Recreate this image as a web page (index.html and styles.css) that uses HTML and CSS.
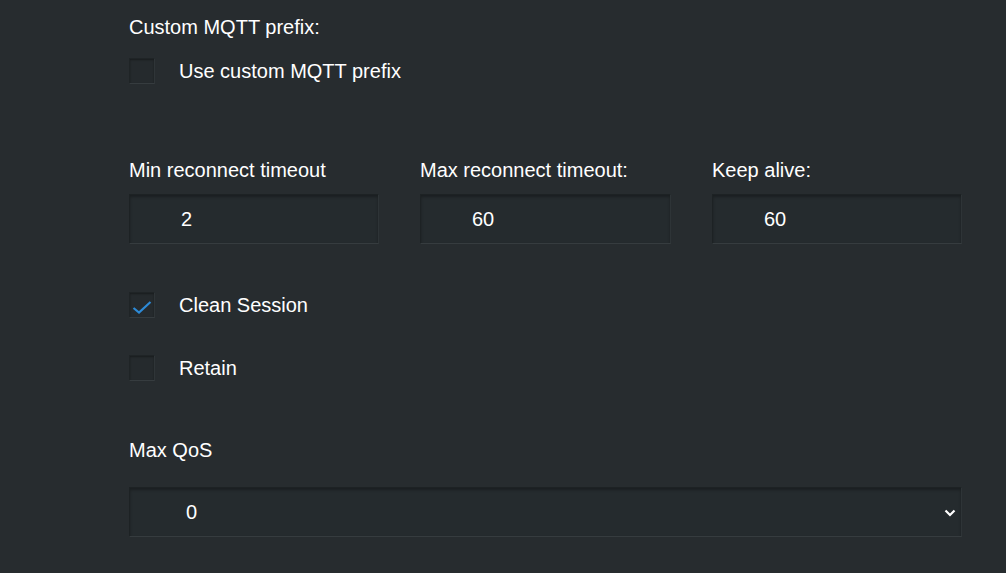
FILE: index.html
```html
<html>

<head>
	<title>MQTT settings</title>
	<link rel="stylesheet" href="styles.css">
</head>

<body>
	<div class="main">
		<div class="title">Custom MQTT prefix:</div>
		<label class="check first">
			<span class="box"></span>
			<span>Use custom MQTT prefix</span>
		</label>

		<div class="cols">
			<div class="col">
				<div class="label">Min reconnect timeout</div>
				<input class="field" type="text" value="2">
			</div>
			<div class="col">
				<div class="label">Max reconnect timeout:</div>
				<input class="field" type="text" value="60">
			</div>
			<div class="col">
				<div class="label">Keep alive:</div>
				<input class="field" type="text" value="60">
			</div>
		</div>

		<label class="check session">
			<span class="box">
				<svg width="26" height="26" viewBox="0 0 26 26"><path d="M4.5 16 L10 20.5 L21.5 10" fill="none" stroke="#2d8ad6" stroke-width="2.2"/></svg>
			</span>
			<span>Clean Session</span>
		</label>
		<label class="check retain">
			<span class="box"></span>
			<span>Retain</span>
		</label>

		<div class="label qos">Max QoS</div>
		<div class="selectbox">
			<div class="field sel">0</div>
			<svg class="chev" width="12" height="8" viewBox="0 0 12 8"><path d="M1.5 1.5 L6 6 L10.5 1.5" fill="none" stroke="#fff" stroke-width="2.2"/></svg>
		</div>
	</div>
</body>

</html>
```

FILE: styles.css
```css
html, body { margin: 0; background: #272c2f; }
body { font-family: "Liberation Sans", Arial, sans-serif; font-size: 20px; color: #fff; }
.main { width: 833px; padding: 15px 0 0 129px; display: flex; flex-direction: column; }

.title, .label { line-height: 24px; height: 24px; }

.check { display: flex; align-items: center; gap: 24px; height: 26px; }
.check.first { margin-top: 19px; }
.check.session { margin-top: 48px; }
.check.retain { margin-top: 37px; }
.box { width: 26px; height: 26px; box-sizing: border-box; background: #252a2d; border: 1px solid #1f2426; border-bottom-color: #363c3f; border-right-color: #2f3538; box-shadow: inset 0 1px 2px rgba(0,0,0,.35); }
.box svg { display: block; margin: -1px; }

.cols { display: flex; gap: 41px; margin-top: 74px; }
.col { width: 250px; display: flex; flex-direction: column; gap: 12px; }
.col:nth-child(2) { width: 251px; }

.field { height: 50px; width: 100%; box-sizing: border-box; background: #252b2e; border: 1px solid #1d2224; border-bottom-color: #363c3f; border-right-color: #2e3437; box-shadow: inset 0 2px 3px rgba(0,0,0,.3); color: #fff; font: inherit; font-size: 20px; padding: 0 0 0 51px; outline: none; }

.qos { margin-top: 57px; }
.selectbox { position: relative; margin-top: 25px; }
.sel { display: flex; align-items: center; padding-left: 56px; }
.chev { position: absolute; right: 6px; top: 22px; }
```
